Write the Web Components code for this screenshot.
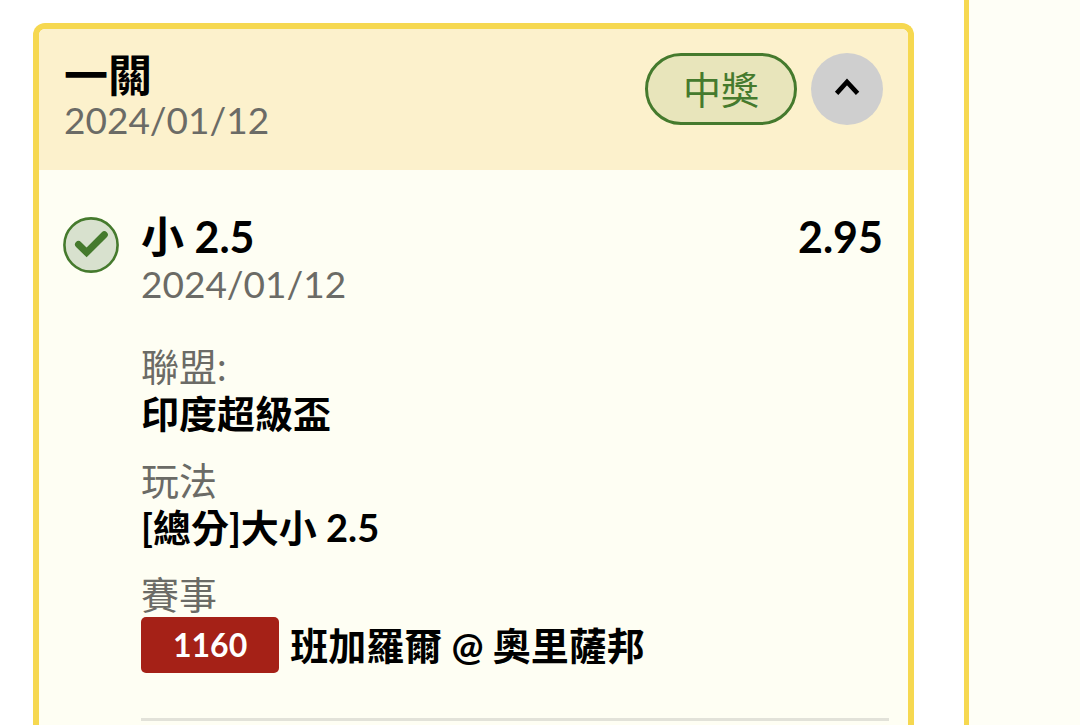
<!DOCTYPE html>
<html lang="zh-Hant">
<head>
<meta charset="utf-8">
<meta name="viewport" content="width=device-width, initial-scale=1">
<title>投注紀錄</title>
<style>
  body {
    margin: 0;
    background: #fff;
    color: #000;
    font-family: Lato, "Noto Sans CJK TC", sans-serif;
    font-size: 38px;
    --gold: #f6d850;
    --cream: #fefef3;
    --muted: #6b6b66;
    --win: #457a2d;
  }
</style>
</head>
<body>
<bet-page>
  <bet-card heading="一關" date="2024/01/12" status="中獎">
    <bet-leg pick="小 2.5" date="2024/01/12" odds="2.95">
      <bet-field label="聯盟:">印度超級盃</bet-field>
      <bet-field label="玩法">[總分]大小 2.5</bet-field>
      <bet-field label="賽事"><event-code>1160</event-code>班加羅爾 @ 奧里薩邦</bet-field>
    </bet-leg>
  </bet-card>
  <side-panel slot="side"></side-panel>
</bet-page>
<script>
  const define = (name, html) => {
    const template = document.createElement('template');
    template.innerHTML = html;
    customElements.define(name, class extends HTMLElement {
      constructor() {
        super();
        this.attachShadow({ mode: 'open' }).append(template.content.cloneNode(true));
      }
      connectedCallback() {
        this.shadowRoot.querySelectorAll('[data-text]').forEach(el => {
          el.textContent = this.getAttribute(el.dataset.text);
        });
      }
    });
  };

  define('bet-page', `
    <style>
      :host { display: flex; min-height: 100vh; }
      main { flex: 1; min-width: 0; display: flex; padding: 23px 50px 0 33px; }
    </style>
    <main><slot></slot></main>
    <slot name="side"></slot>`);

  define('side-panel', `
    <style>
      :host { flex: 0 0 111px; border-left: 5px solid var(--gold); background: #fefef6; }
    </style>`);

  define('bet-card', `
    <style>
      :host {
        display: block; flex: 1; min-width: 0; overflow: hidden;
        border: 6px solid var(--gold); border-bottom: 0;
        border-radius: 12px 12px 0 0; background: var(--cream);
      }
      header {
        display: flex; align-items: flex-start; gap: 14px;
        padding: 24px 25px 28px 25px; background: #fcf1cc;
      }
      .titles { flex: 1; }
      h1 { margin: 0; font-size: 44px; line-height: 44px; font-weight: 700; }
      time { display: block; font-size: 37px; line-height: 45px; color: var(--muted); }
      .status {
        box-sizing: border-box; height: 72px; padding: 0 35px;
        border: 3px solid var(--win); border-radius: 36px;
        background: #e8e5bb; color: var(--win); line-height: 66px;
      }
      button {
        display: grid; place-items: center; width: 72px; height: 72px;
        padding: 0; border: 0; border-radius: 50%; background: #cfcfcf;
      }
      svg { width: 72px; height: 72px; }
    </style>
    <header>
      <div class="titles"><h1 data-text="heading"></h1><time data-text="date"></time></div>
      <span class="status" data-text="status"></span>
      <button type="button" aria-label="收合" aria-expanded="true">
        <svg viewBox="0 0 72 72" aria-hidden="true"><path d="M25.6 40.4 36 29 46.6 40.4" fill="none" stroke="#000" stroke-width="4.6"/></svg>
      </button>
    </header>
    <slot></slot>`);

  define('bet-leg', `
    <style>
      :host { display: flex; gap: 22px; padding: 43px 19px 0 24px; }
      svg { flex: none; width: 56px; height: 56px; margin-top: 4px; }
      .content { flex: 1; min-width: 0; border-bottom: 3px solid #e2e2d9; padding-bottom: 45px; }
      .top { display: flex; justify-content: space-between; padding-right: 6px; font-size: 43px; line-height: 48px; font-weight: 700; }
      h2 { margin: 0; font: inherit; }
      time { display: block; font-size: 37px; line-height: 45px; color: var(--muted); }
      dl { display: grid; gap: 21px; margin: 38px 0 0; }
    </style>
    <svg viewBox="0 0 56 56" role="img" aria-label="中獎">
      <circle cx="28" cy="28" r="26.6" fill="#d8e1ce" stroke="#457a2d" stroke-width="2.6"/>
      <path d="M15.5 27.5 23.6 35.4 41.3 17.7" fill="none" stroke="#457a2d" stroke-width="7" stroke-linecap="round"/>
    </svg>
    <div class="content">
      <div class="top"><h2 data-text="pick"></h2><span data-text="odds"></span></div>
      <time data-text="date"></time>
      <dl><slot></slot></dl>
    </div>`);

  define('bet-field', `
    <style>
      :host { display: block; }
      dt { line-height: 45px; color: var(--muted); }
      dd { display: flex; align-items: center; gap: 11px; margin: 0; min-height: 48px; line-height: 48px; font-weight: 700; }
    </style>
    <dt data-text="label"></dt>
    <dd><slot></slot></dd>`);

  define('event-code', `
    <style>
      :host {
        display: block; flex: none; padding: 0 32px; border-radius: 5px;
        background: #a52117; color: #fff; font-size: 32px; line-height: 56px; font-weight: 700;
      }
    </style>
    <slot></slot>`);
</script>
</body>
</html>
